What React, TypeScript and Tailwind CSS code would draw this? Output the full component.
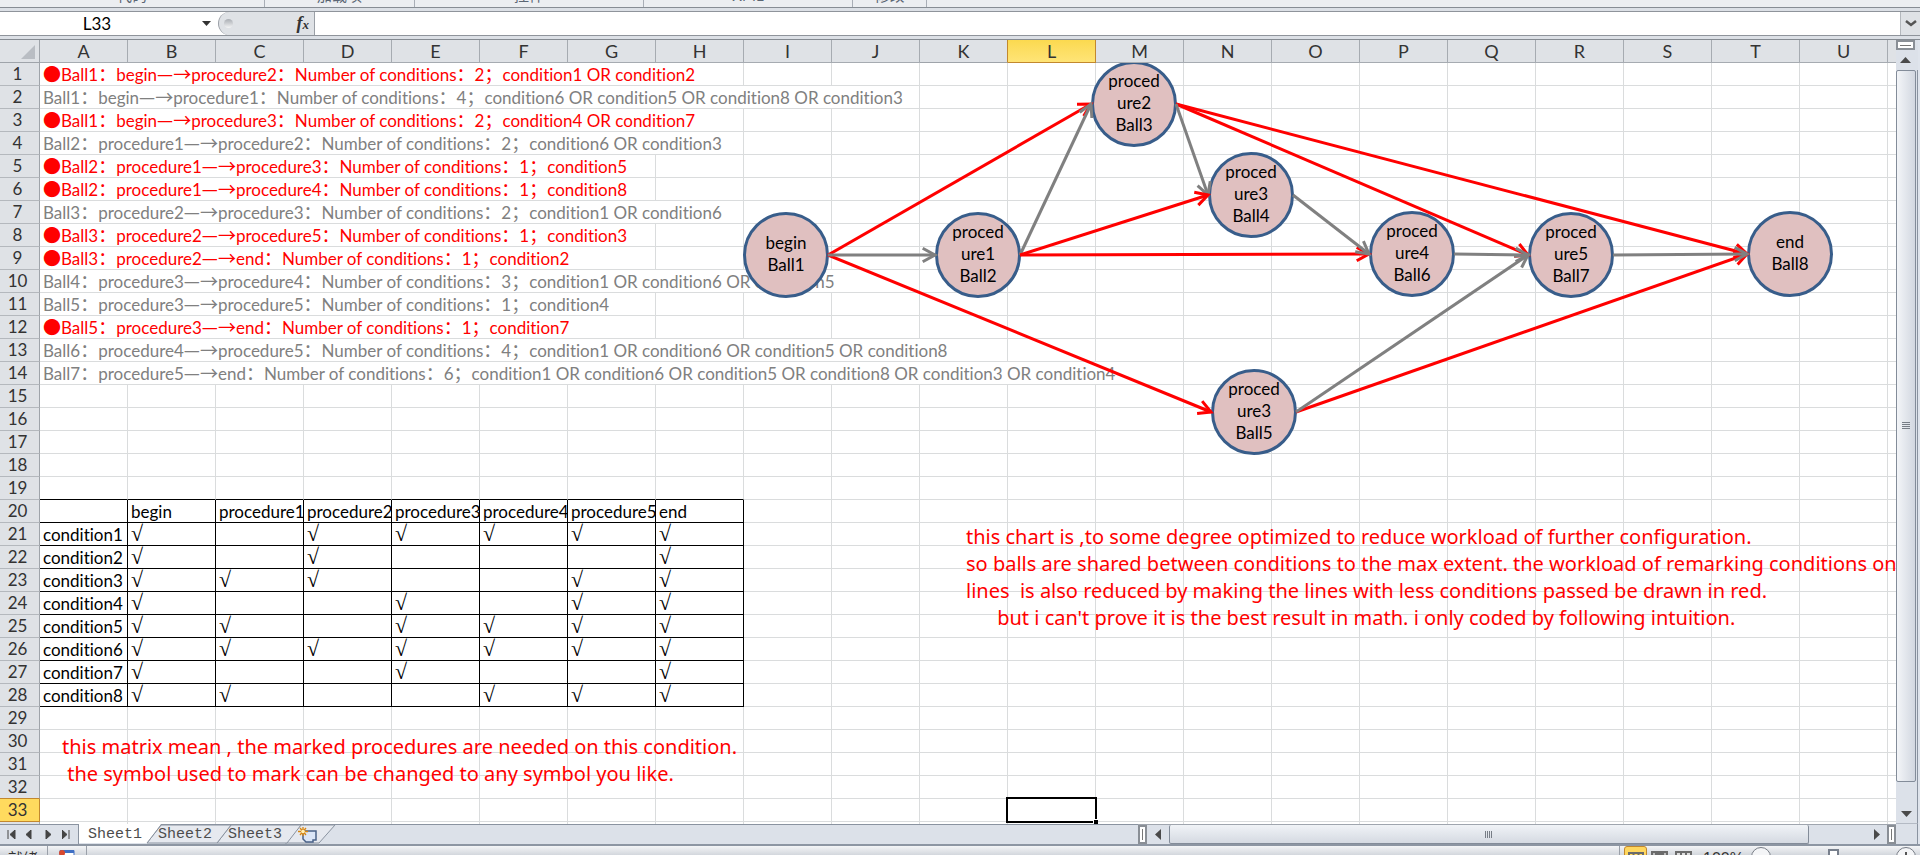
import { Fragment } from 'react';
import type { ReactNode } from 'react';

const COLUMNS = 'ABCDEFGHIJKLMNOPQRSTUV'.split('');
const ROW_COUNT = 34;
const ACTIVE_COLUMN = 'L';
const ACTIVE_ROW = 33;

type LogLine = { text: string; span: number; marked?: boolean };

// span = how many columns the text spills over
const logLines: LogLine[] = [
  { text: '●Ball1：begin—→procedure2：Number of conditions：2；condition1 OR condition2', span: 8, marked: true },
  { text: 'Ball1：begin—→procedure1：Number of conditions：4；condition6 OR condition5 OR condition8 OR condition3', span: 10 },
  { text: '●Ball1：begin—→procedure3：Number of conditions：2；condition4 OR condition7', span: 8, marked: true },
  { text: 'Ball2：procedure1—→procedure2：Number of conditions：2；condition6 OR condition3', span: 8 },
  { text: '●Ball2：procedure1—→procedure3：Number of conditions：1；condition5', span: 7, marked: true },
  { text: '●Ball2：procedure1—→procedure4：Number of conditions：1；condition8', span: 7, marked: true },
  { text: 'Ball3：procedure2—→procedure3：Number of conditions：2；condition1 OR condition6', span: 8 },
  { text: '●Ball3：procedure2—→procedure5：Number of conditions：1；condition3', span: 7, marked: true },
  { text: '●Ball3：procedure2—→end：Number of conditions：1；condition2', span: 7, marked: true },
  { text: 'Ball4：procedure3—→procedure4：Number of conditions：3；condition1 OR condition6 OR condition5', span: 10 },
  { text: 'Ball5：procedure3—→procedure5：Number of conditions：1；condition4', span: 7 },
  { text: '●Ball5：procedure3—→end：Number of conditions：1；condition7', span: 7, marked: true },
  { text: 'Ball6：procedure4—→procedure5：Number of conditions：4；condition1 OR condition6 OR condition5 OR condition8', span: 11 },
  { text: 'Ball7：procedure5—→end：Number of conditions：6；condition1 OR condition6 OR condition5 OR condition8 OR condition3 OR condition4', span: 13 },
];

const MATRIX_TOP = 20;
const matrix: string[][] = [
  ['', 'begin', 'procedure1', 'procedure2', 'procedure3', 'procedure4', 'procedure5', 'end'],
  ['condition1', '√', '', '√', '√', '√', '√', '√'],
  ['condition2', '√', '', '√', '', '', '', '√'],
  ['condition3', '√', '√', '√', '', '', '√', '√'],
  ['condition4', '√', '', '', '√', '', '√', '√'],
  ['condition5', '√', '√', '', '√', '√', '√', '√'],
  ['condition6', '√', '√', '√', '√', '√', '√', '√'],
  ['condition7', '√', '', '', '√', '', '', '√'],
  ['condition8', '√', '√', '', '', '√', '√', '√'],
];

type Ball = { id: number; x: number; y: number; label: string[] };

// Centres, measured from the corner of the cell area
const balls: Ball[] = [
  { id: 1, x: 786, y: 192, label: ['begin', 'Ball1'] },
  { id: 2, x: 978, y: 192, label: ['proced', 'ure1', 'Ball2'] },
  { id: 3, x: 1134, y: 41, label: ['proced', 'ure2', 'Ball3'] },
  { id: 4, x: 1251, y: 132, label: ['proced', 'ure3', 'Ball4'] },
  { id: 5, x: 1254, y: 349, label: ['proced', 'ure3', 'Ball5'] },
  { id: 6, x: 1412, y: 191, label: ['proced', 'ure4', 'Ball6'] },
  { id: 7, x: 1571, y: 192, label: ['proced', 'ure5', 'Ball7'] },
  { id: 8, x: 1790, y: 191, label: ['end', 'Ball8'] },
];

const RADIUS = 43;
const RED = '#ff0000';
const GRAY = '#808080';

const links: [number, number, string][] = [
  [1, 3, RED],
  [1, 5, RED],
  [2, 6, RED],
  [3, 7, RED],
  [3, 8, RED],
  [5, 8, RED],
  [1, 2, GRAY],
  [2, 3, GRAY],
  [3, 4, GRAY],
  [2, 4, RED],
  [4, 6, GRAY],
  [6, 7, GRAY],
  [5, 7, GRAY],
  [7, 8, GRAY],
];

function Link({ from, to, color }: { from: Ball; to: Ball; color: string }) {
  const x1 = from.x + RADIUS - 1;
  const x2 = to.x - RADIUS;
  const angle = Math.atan2(to.y - from.y, x2 - x1);
  const wing = (turn: number) =>
    `${x2 - 14 * Math.cos(angle + turn)},${to.y - 14 * Math.sin(angle + turn)}`;

  return (
    <g stroke={color} strokeWidth="3" fill="none">
      <line x1={x1} y1={from.y} x2={x2} y2={to.y} />
      <polyline points={`${wing(0.5)} ${x2},${to.y} ${wing(-0.5)}`} />
    </g>
  );
}

function Diagram() {
  const find = (id: number) => balls.find((b) => b.id === id)!;

  return (
    <div className="absolute inset-x-0 bottom-0 top-[23px] overflow-hidden pointer-events-none">
      {balls.map((ball) => (
        <div
          key={ball.id}
          className="absolute flex size-[86px] flex-col items-center justify-center rounded-full border-3 border-[#385d8a] bg-[#e0c0c0] pb-[2px] text-[17px] leading-[22px] text-black"
          style={{ left: ball.x - RADIUS, top: ball.y - RADIUS }}
        >
          {ball.label.map((line) => (
            <span key={line}>{line}</span>
          ))}
        </div>
      ))}
      <svg className="absolute inset-0 h-full w-full">
        {links.map(([from, to, color]) => (
          <Link key={`${from}-${to}`} from={find(from)} to={find(to)} color={color} />
        ))}
      </svg>
    </div>
  );
}

// Full-width symbols come from the CJK face, the rest from the Latin one
function MixedText({ text }: { text: string }) {
  return (
    <>
      {text.split(/([●：；—→]+)/).map((part, i) =>
        i % 2 ? (
          <span key={i} className="text-[18px] leading-none font-['Noto_Sans_CJK_SC',sans-serif]">
            {part}
          </span>
        ) : (
          <Fragment key={i}>{part}</Fragment>
        ),
      )}
    </>
  );
}

function SheetRow({ row }: { row: number }) {
  const log = logLines[row - 1];
  const cells = matrix[row - MATRIX_TOP];
  const active = row === ACTIVE_ROW;
  const out: ReactNode[] = [];

  for (let c = 0; c < COLUMNS.length; c++) {
    const key = COLUMNS[c];
    if (log && c === 0) {
      out.push(
        <td
          key={key}
          colSpan={log.span}
          className={`border-r border-b border-[#dadcdd] pl-[3px] ${log.marked ? 'text-[#ff0000]' : 'text-[#808080]'}`}
        >
          <div className="h-[22px] whitespace-nowrap leading-[23px]">
            <MixedText text={log.text} />
          </div>
        </td>,
      );
      c = log.span - 1;
    } else if (cells && c < 8) {
      out.push(
        <td key={key} className="border-r border-b border-black pl-[3px]">
          {cells[c] === '√' ? (
            <div className="h-[22px] overflow-hidden text-[22px] leading-[22px] font-['Liberation_Serif',serif]">√</div>
          ) : (
            <div className="h-[22px] overflow-hidden whitespace-nowrap leading-[23px]">{cells[c]}</div>
          )}
        </td>,
      );
    } else {
      const aboveMatrix = row === MATRIX_TOP - 1 && c < 8;
      out.push(
        <td
          key={key}
          className={`border-r border-b border-r-[#dadcdd] ${aboveMatrix ? 'border-b-black' : 'border-b-[#dadcdd]'}`}
        >
          {active && key === ACTIVE_COLUMN && (
            <div className="relative h-[22px]">
              <div className="absolute -top-[2px] -right-[2px] -bottom-[2px] -left-[2px] border-2 border-black" />
              <div className="absolute -right-[3px] -bottom-[3px] size-[5px] border-t border-l border-white bg-black" />
            </div>
          )}
        </td>,
      );
    }
  }

  return (
    <tr className="h-[23px]">
      <th
        scope="row"
        className={`border-r border-b font-normal text-[#333] leading-[22px] pr-1 ${
          active
            ? 'border-[#c2882e] bg-[#ffda5e]'
            : row === ACTIVE_ROW - 1
              ? 'border-r-[#9fa4aa] border-b-[#c2882e] bg-[#dfe2e6]'
              : 'border-r-[#9fa4aa] border-b-[#b4b8bd] bg-[#dfe2e6]'
        }`}
      >
        {row < ROW_COUNT ? row : ''}
      </th>
      {out}
    </tr>
  );
}

function Grid() {
  return (
    <div className="relative min-w-0 flex-1 overflow-hidden bg-white">
      <table className="w-[1976px] table-fixed border-separate border-spacing-0 text-[17px] text-black">
        <colgroup>
          <col className="w-[40px]" />
          {COLUMNS.map((name) => (
            <col key={name} className="w-[88px]" />
          ))}
        </colgroup>
        <thead>
          <tr className="h-[23px]">
            <th className="border-r border-b border-[#9fa4aa] bg-[#dfe2e6] p-0">
              <svg viewBox="0 0 39 22" className="block h-[22px] w-[39px]">
                <path d="M35 5v14H21z" fill="#b9bdc3" />
              </svg>
            </th>
            {COLUMNS.map((name) => (
              <th
                key={name}
                scope="col"
                className={`border-r border-b text-[18px] font-normal leading-[22px] text-[#333] ${
                  name === ACTIVE_COLUMN
                    ? 'border-[#c2882e] bg-linear-to-b from-[#fbd94f] to-[#ffe476]'
                    : name === 'K'
                      ? 'border-r-[#c2882e] border-b-[#9fa4aa] bg-[#dfe2e6]'
                      : 'border-[#a6abb1] bg-[#dfe2e6]'
                }`}
              >
                {name === 'V' ? '' : name}
              </th>
            ))}
          </tr>
        </thead>
        <tbody>
          {Array.from({ length: ROW_COUNT }, (_, i) => (
            <SheetRow key={i} row={i + 1} />
          ))}
        </tbody>
      </table>

      <Diagram />

      <p className="absolute top-[483px] left-[966px] whitespace-pre text-[20px] leading-[27px] text-[#ff0000] font-['Noto_Sans',sans-serif]">
        {[
          'this chart is ,to some degree optimized to reduce workload of further configuration.',
          'so balls are shared between conditions to the max extent. the workload of remarking conditions on',
          'lines  is also reduced by making the lines with less conditions passed be drawn in red.',
          "      but i can't prove it is the best result in math. i only coded by following intuition.",
        ].join('\n')}
      </p>
      <p className="absolute top-[693px] left-[62px] whitespace-pre text-[20px] leading-[27px] text-[#ff0000] font-['Noto_Sans',sans-serif]">
        {[
          'this matrix mean , the marked procedures are needed on this condition.',
          ' the symbol used to mark can be changed to any symbol you like.',
        ].join('\n')}
      </p>
    </div>
  );
}

function Ribbon() {
  const group = 'flex items-end justify-center border-r border-[#a9aeb6] pb-1 leading-[16px]';
  return (
    <div className="flex h-[8px] shrink-0 overflow-hidden border-b border-[#878d94] bg-[#eceef1] text-[15px] text-[#5b6674]">
      <div className={`${group} w-[265px]`}>代码</div>
      <div className={`${group} w-[150px]`}>加载项</div>
      <div className={`${group} w-[229px]`}>控件</div>
      <div className={`${group} w-[209px]`}>XML</div>
      <div className={`${group} w-[74px]`}>修改</div>
    </div>
  );
}

function FormulaBar() {
  return (
    <div className="mt-[3px] flex h-[25px] shrink-0 border-y border-[#8f949b] bg-white">
      <div className="flex w-[218px] items-center">
        <input
          aria-label="Name Box"
          defaultValue="L33"
          className="w-[194px] bg-transparent text-center text-[17px] leading-[20px] text-black outline-none"
        />
        <button aria-label="Name list" className="flex h-full w-[24px] items-center justify-center">
          <svg width="9" height="5">
            <path d="M0 0h9L4.500 5z" fill="#333" />
          </svg>
        </button>
      </div>
      <div className="flex w-[97px] items-center justify-between rounded-l-full border-r border-l border-[#9a9fa6] bg-[#dfe2e6] pr-[5px] pl-[5px]">
        <span className="size-[9px] rounded-full bg-linear-to-b from-[#a9adb3] to-[#f4f5f6]" />
        <button aria-label="Insert function" className="text-[18px] leading-[20px] font-bold italic text-[#333] font-['Liberation_Serif',serif]">
          f<span className="text-[13px]">x</span>
        </button>
      </div>
      <input aria-label="Formula" className="min-w-0 flex-1 bg-transparent px-1 outline-none" />
      <button aria-label="Expand formula bar" className="flex w-[20px] items-center justify-center border-l border-[#b4b8bd] bg-[#dfe2e6]">
        <svg width="12" height="7" fill="none" stroke="#555" strokeWidth="2.500">
          <path d="M1 1l5 4 5-4" />
        </svg>
      </button>
    </div>
  );
}

function VerticalScroll() {
  return (
    <div className="flex w-[24px] shrink-0 flex-col border-r-2 border-[#dfe4ec] bg-[#dce1e9]">
      <div className="mr-[3px] flex h-[10px] shrink-0 items-center justify-center border-2 border-[#8a8f96] bg-white">
        <span className="h-px w-[11px] bg-[#777]" />
      </div>
      <button aria-label="Scroll up" className="mr-[3px] flex h-[20px] shrink-0 items-center justify-center">
        <svg width="11" height="6">
          <path d="M0 6h11L5.500 0z" fill="#4a4a4a" />
        </svg>
      </button>
      <div className="min-h-0 flex-1 border-r border-[#8a93a0]">
        <div className="mr-px flex h-[97%] flex-col items-center justify-center gap-px rounded-[2px] border border-[#838c99] bg-linear-to-r from-[#f3f5f8] to-[#d2d7e0]">
          {[0, 1, 2, 3].map((i) => (
            <span key={i} className="h-px w-[8px] bg-[#777d86]" />
          ))}
        </div>
      </div>
      <button aria-label="Scroll down" className="flex h-[20px] shrink-0 items-center justify-center border-r border-b border-[#8a93a0] border-b-[#b4bac4]">
        <svg width="11" height="6">
          <path d="M0 0h11L5.500 6z" fill="#4a4a4a" />
        </svg>
      </button>
    </div>
  );
}

const navIcons = [
  { name: 'First sheet', d: 'M1 0v9M8 0L3 4.500 8 9z' },
  { name: 'Previous sheet', d: 'M6 0L1 4.500 6 9z' },
  { name: 'Next sheet', d: 'M2 0l5 4.500L2 9z' },
  { name: 'Last sheet', d: 'M0 0l5 4.500L0 9zM7 0v9' },
];

function SheetBar() {
  return (
    <div className="flex h-[20px] shrink-0 bg-[#dce1e9]">
      <div className="flex w-16/27 shrink-0 border-t border-[#8a93a0]">
        <div className="flex w-[79px] items-center justify-around border-r border-[#8a93a0] px-[2px]">
          {navIcons.map((icon) => (
            <button key={icon.name} aria-label={icon.name}>
              <svg width="9" height="9" fill="#444" stroke="#444">
                <path d={icon.d} />
              </svg>
            </button>
          ))}
        </div>
        <div className="relative flex">
          <svg className="absolute -top-px left-0 h-[20px] w-[260px]" stroke="#8a93a0">
            <path d="M206 19L222 1H256L240 19z" fill="#e6e9ef" />
            <path d="M138 19L152 1H222L208 19z" fill="#e6e9ef" />
            <path d="M68 19L82 1H152L138 19z" fill="#e6e9ef" />
            <path d="M0 0H82L68 19H0z" fill="#fff" stroke="none" />
            <path d="M82 1L68 19" />
          </svg>
          {['Sheet1', 'Sheet2', 'Sheet3'].map((name) => (
            <button
              key={name}
              className="relative w-[70px] pl-[2px] text-[15px] leading-[19px] text-[#4d4d4d] font-['Liberation_Mono',monospace]"
            >
              {name}
            </button>
          ))}
          <button aria-label="Insert worksheet" className="relative flex w-[38px] items-center justify-center">
            <svg width="20" height="16">
              <path d="M5 4h13v9h-3v2H8l-3-3z" fill="#dbe6f7" stroke="#4a6288" strokeWidth="1.500" />
              <path d="M5 0v9M0 4.500h10M2 1l6 7M8 1L2 8" stroke="#d9860f" strokeWidth="1.300" />
              <circle cx="5" cy="4.500" r="1.800" fill="#fff1b8" />
            </svg>
          </button>
        </div>
      </div>
      <div className="flex min-w-0 flex-1 border-t border-[#9fa5ae]">
        <div className="flex w-[9px] shrink-0 items-center justify-center border-2 border-[#8a8f96] bg-white">
          <span className="h-[11px] w-px bg-[#777]" />
        </div>
        <button aria-label="Scroll left" className="flex w-[22px] shrink-0 items-center justify-center">
          <svg width="6" height="11">
            <path d="M6 0v11L0 5.500z" fill="#4a4a4a" />
          </svg>
        </button>
        <div className="min-w-0 flex-1">
          <div className="flex h-[19px] w-11/12 items-center justify-center gap-px rounded-[2px] border border-t-0 border-[#838c99] bg-linear-to-b from-[#f0f3f7] to-[#d5dae2]">
            {[0, 1, 2, 3].map((i) => (
              <span key={i} className="h-[7px] w-px bg-[#777d86]" />
            ))}
          </div>
        </div>
        <button aria-label="Scroll right" className="flex w-[20px] shrink-0 items-center justify-center">
          <svg width="6" height="11">
            <path d="M0 0v11l6-5.500z" fill="#4a4a4a" />
          </svg>
        </button>
        <div className="flex w-[9px] shrink-0 items-center justify-center border-2 border-[#8a8f96] bg-white">
          <span className="h-[11px] w-px bg-[#777]" />
        </div>
      </div>
      <div className="w-[24px] shrink-0 border-r-2 border-[#dfe4ec]">
        <div className="h-full border-r border-[#8a93a0]" />
      </div>
    </div>
  );
}

function StatusBar() {
  return (
    <div className="h-[11px] shrink-0 overflow-hidden border-t-2 border-[#8d96a3] bg-linear-to-b from-[#f4f5f7] to-[#d3d7dd]">
      <div className="flex h-[22px] items-start text-[15px] leading-[20px] text-[#333]">
        <span className="w-[48px] border-r border-[#9aa0a9] pt-[2px] pl-[8px]">就绪</span>
        <button aria-label="Record macro" className="flex w-[39px] justify-center border-r border-[#9aa0a9] pt-[4px]">
          <svg width="16" height="14">
            <path d="M1 0.500h14v13H1z" fill="#fff" stroke="#3f6fc4" />
            <path d="M1 0h14v3H1z" fill="#3f6fc4" />
            <circle cx="3" cy="3" r="3" fill="#d8492f" />
          </svg>
        </button>
        <div className="ml-auto flex h-full items-start border-l border-[#9aa0a9] pl-[4px]">
          <button aria-label="Normal view" className="flex h-[22px] w-[23px] justify-center rounded-[3px] border border-[#c2882e] bg-[#ffd75e] pt-[5px]">
            <svg width="16" height="12" fill="none" stroke="#6b6b6b" strokeWidth="2">
              <path d="M1 1h14v10H1zM5.500 1v10M10.500 1v10M1 6h14" />
            </svg>
          </button>
          <button aria-label="Page layout" className="flex w-[24px] justify-center pt-[5px]">
            <svg width="17" height="12" fill="#fff" stroke="#6b6b6b" strokeWidth="2">
              <path d="M1 1h15v12H1z" fill="#bbb" />
              <path d="M5 3h7v9H5z" />
            </svg>
          </button>
          <button aria-label="Page break preview" className="flex w-[24px] justify-center pt-[5px]">
            <svg width="17" height="12" fill="#ddd" stroke="#6b6b6b" strokeWidth="2">
              <path d="M1 1h15v12H1zM6 0v7M11 0v7M1 7h15" />
            </svg>
          </button>
          <span className="w-[56px] pt-[3px] pl-[8px] text-[16px] font-['Liberation_Sans',sans-serif]">100%</span>
          <button aria-label="Zoom out" className="mt-px size-[20px] rounded-full border border-[#777d86] bg-[#f4f5f7]" />
          <input
            type="range"
            aria-label="Zoom"
            defaultValue={50}
            className="mt-[3px] h-[16px] w-[125px] appearance-none bg-transparent [&::-webkit-slider-thumb]:h-[16px] [&::-webkit-slider-thumb]:w-[11px] [&::-webkit-slider-thumb]:appearance-none [&::-webkit-slider-thumb]:border-2 [&::-webkit-slider-thumb]:border-[#777f8c] [&::-webkit-slider-thumb]:bg-white"
          />
          <button aria-label="Zoom in" className="mt-px mr-[4px] flex size-[20px] items-center justify-center rounded-full border border-[#777d86] bg-[#f4f5f7]">
            <svg width="10" height="10" stroke="#555" strokeWidth="2">
              <path d="M5 0v10M0 5h10" />
            </svg>
          </button>
        </div>
      </div>
    </div>
  );
}

export default function App() {
  return (
    <div className="flex h-screen flex-col overflow-hidden bg-[#dce0e6] font-['Lato','Noto_Sans_CJK_SC',sans-serif] [font-variant-ligatures:none]">
      <Ribbon />
      <FormulaBar />
      <div className="mt-[3px] flex min-h-0 flex-1 border-t border-[#858b92]">
        <Grid />
        <VerticalScroll />
      </div>
      <SheetBar />
      <StatusBar />
    </div>
  );
}
